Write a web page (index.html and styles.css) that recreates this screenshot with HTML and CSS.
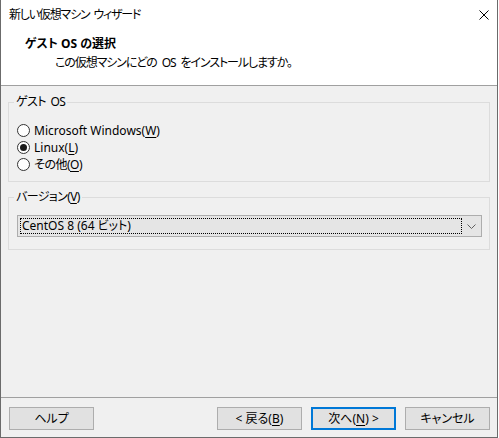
FILE: index.html
```html
<!DOCTYPE html>
<html lang="ja">
<head>
<meta charset="utf-8">
<title>新しい仮想マシン ウィザード</title>
<link rel="stylesheet" href="styles.css">
</head>
<body>
<div class="window">
  <div class="titlebar">
    <span class="title">新しい仮想マシン ウィザード</span>
    <svg class="close" width="10" height="10" viewBox="0 0 10 10"><path d="M0.5 0.5 L9.5 9.5 M9.5 0.5 L0.5 9.5" stroke="#000" stroke-width="1" fill="none"/></svg>
  </div>
  <div class="header">
    <div class="h-title">ゲスト OS の選択</div>
    <div class="h-sub">この仮想マシンにどの OS をインストールしますか。</div>
  </div>
  <div class="content">
    <fieldset class="group group-os">
      <legend>ゲスト OS</legend>
      <div class="radio"><span class="rb"></span><span>Microsoft Windows(<u>W</u>)</span></div>
      <div class="radio"><span class="rb checked"></span><span>Linux(<u>L</u>)</span></div>
      <div class="radio"><span class="rb"></span><span class="jp">その他(<u>O</u>)</span></div>
    </fieldset>
    <fieldset class="group group-ver">
      <legend>バージョン(<u>V</u>)</legend>
      <div class="combo">
        <div class="combo-text">CentOS 8 (64 ビット)</div>
        <div class="combo-arrow"><svg width="9" height="5" viewBox="0 0 9 5"><path d="M0.5 0.5 L4.5 4.5 L8.5 0.5" stroke="#606060" stroke-width="1" fill="none"/></svg></div>
      </div>
    </fieldset>
  </div>
  <div class="footer">
    <button class="btn">ヘルプ</button>
    <div class="spacer"></div>
    <button class="btn">&lt; 戻る(<u>B</u>)</button>
    <button class="btn default">次へ(<u>N</u>) &gt;</button>
    <button class="btn">キャンセル</button>
  </div>
</div>
</body>
</html>
```

FILE: styles.css
```css
html, body {
  margin: 0;
  padding: 0;
  background: #ffffff;
}
body {
  font-family: "Noto Sans", "Noto Sans CJK JP", sans-serif;
  font-size: 12px;
  line-height: 16px;
  color: #000;
  font-feature-settings: "palt";
}
.window {
  width: 498px;
  height: 438px;
  box-sizing: border-box;
  border: 1px solid #6b6b6b;
  border-top: none;
  display: flex;
  flex-direction: column;
  background: #f0f0f0;
}
.titlebar {
  height: 30px;
  flex: none;
  background: #fff;
  display: flex;
  align-items: center;
  padding-left: 8px;
  padding-right: 8px;
}
.title {
  flex: 1;
  margin-top: -1px;
  letter-spacing: -1.2px;
  word-spacing: 2px;
}
.close {
  display: block;
}
.header {
  flex: none;
  height: 56px;
  box-sizing: border-box;
  background: #fff;
  border-bottom: 1px solid #a0a0a0;
  padding-top: 6px;
}
.h-title {
  font-weight: bold;
  padding-left: 24px;
}
.h-sub {
  padding-left: 54px;
  margin-top: 3px;
  letter-spacing: -1.1px;
  word-spacing: 3px;
}
.content {
  flex: 1;
  padding: 8px 7px 0 7px;
}
.group {
  margin: 0;
  border: 1px solid #dcdcdc;
  padding: 0 7px 0 8px;
  min-width: 0;
}
.group legend {
  padding: 0 2px;
  margin-left: -3px;
  line-height: 16px;
  letter-spacing: -0.6px;
  word-spacing: 2px;
}
.group-os {
  padding-top: 12px;
  padding-bottom: 8px;
}
.radio {
  display: flex;
  align-items: center;
  height: 17px;
  gap: 4px;
}
.jp {
  letter-spacing: -0.5px;
}
.rb {
  width: 13px;
  height: 13px;
  box-sizing: border-box;
  border: 1px solid #333;
  border-radius: 50%;
  background: #fff;
  position: relative;
  flex: none;
}
.rb.checked::after {
  content: "";
  position: absolute;
  left: 2px;
  top: 2px;
  width: 7px;
  height: 7px;
  border-radius: 50%;
  background: #1a1a1a;
}
.group-ver {
  margin-top: 7px;
  padding-top: 10px;
  padding-bottom: 12px;
}
.combo {
  height: 22px;
  box-sizing: border-box;
  border: 1px solid #adadad;
  background: #e5e5e5;
  display: flex;
}
.combo-text {
  flex: 1;
  margin: 2px 0 2px 2px;
  border: 1px dotted #000;
  padding-left: 1px;
  line-height: 14px;
}
.combo-arrow {
  width: 19px;
  flex: none;
  display: flex;
  align-items: center;
  justify-content: center;
}
.combo-arrow svg {
  display: block;
}
.footer {
  flex: none;
  height: 40px;
  box-sizing: border-box;
  border-top: 1px solid #a0a0a0;
  padding: 9px 7px 0 8px;
  display: flex;
  align-items: flex-start;
  gap: 9px;
}
.spacer {
  flex: 1;
}
.btn {
  width: 85px;
  height: 23px;
  box-sizing: border-box;
  border: 1px solid #adadad;
  background: #e1e1e1;
  font: inherit;
  font-feature-settings: "palt";
  color: #000;
  padding: 0;
  margin: 0;
  line-height: 16px;
}
.btn.default {
  border: 2px solid #0078d7;
}
u {
  text-underline-offset: 2px;
}
```
